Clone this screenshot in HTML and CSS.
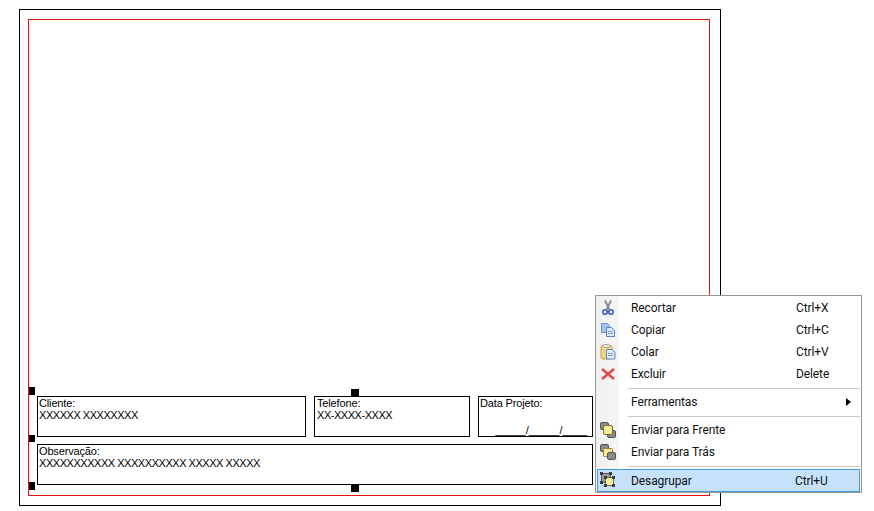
FILE: index.html
```html
<!DOCTYPE html>
<html lang="pt">
<head>
  <meta charset="UTF-8">
  <title>Desagrupar</title>
  <link rel="stylesheet" href="styles.css">
</head>
<body>
  <!-- folha do projeto -->
  <div class="sheet">
    <div class="margin"></div>

    <div class="field field-cliente">
      <p class="label">Cliente:</p>
      <p class="value">XXXXXX XXXXXXXX</p>
    </div>
    <div class="field field-telefone">
      <p class="label">Telefone:</p>
      <p class="value">XX-XXXX-XXXX</p>
    </div>
    <div class="field field-data">
      <p class="label">Data Projeto:</p>
      <p class="date">_____/_____/____</p>
    </div>
    <div class="field field-obs">
      <p class="label">Observação:</p>
      <p class="value">XXXXXXXXXXX XXXXXXXXXX XXXXX XXXXX</p>
    </div>

    <span class="handle h-top-left"></span>
    <span class="handle h-top-mid"></span>
    <span class="handle h-mid-left"></span>
    <span class="handle h-bottom-left"></span>
    <span class="handle h-bottom-mid"></span>
  </div>

  <!-- menu de contexto -->
  <div class="menu">
    <div class="item">
      <svg class="icon" viewBox="0 0 16 16">
        <path d="M5 0.5l4.4 9M11 0.5L6.6 9.5" stroke="#7f8896" stroke-width="1.8" fill="none"/>
        <circle cx="5" cy="12" r="2.3" fill="#dfe8f5" stroke="#3e68b4" stroke-width="1.6"/>
        <circle cx="11" cy="12" r="2.3" fill="#dfe8f5" stroke="#3e68b4" stroke-width="1.6"/>
      </svg>
      <span class="name">Recortar</span><span class="key">Ctrl+X</span>
    </div>
    <div class="item">
      <svg class="icon" viewBox="0 0 16 16">
        <path d="M1.5 1.5h6l2 2v7h-8z" fill="#a9c1ee" stroke="#6f8ccb"/>
        <path d="M6.5 5.5h5l3 3v6h-8z" fill="#dce7f9" stroke="#5f7fc4"/>
        <path d="M8 9.5h5M8 11.5h5" stroke="#7f9bd6"/>
      </svg>
      <span class="name">Copiar</span><span class="key">Ctrl+C</span>
    </div>
    <div class="item">
      <svg class="icon" viewBox="0 0 16 16">
        <rect x="1" y="1.5" width="11" height="13.5" rx="2" fill="#f5d77e" stroke="#b9a15c"/>
        <rect x="3.5" y="0.5" width="6" height="3" rx="1" fill="#ece8d8" stroke="#a8a48c"/>
        <path d="M6.5 5.5h5.5l3 2.5v7h-8.5z" fill="#e4ecfa" stroke="#6b86c6"/>
        <path d="M8 9.5h5.5M8 11.5h5.5" stroke="#7f9bd6"/>
      </svg>
      <span class="name">Colar</span><span class="key">Ctrl+V</span>
    </div>
    <div class="item">
      <svg class="icon" viewBox="0 0 16 16">
        <path d="M2 3l12 10M14 3L2 13" stroke="#e8474c" stroke-width="2.6" fill="none"/>
      </svg>
      <span class="name">Excluir</span><span class="key">Delete</span>
    </div>
    <div class="sep"></div>
    <div class="item">
      <span class="name">Ferramentas</span><span class="arrow"></span>
    </div>
    <div class="sep"></div>
    <div class="item">
      <svg class="icon" viewBox="0 0 16 16">
        <rect x="0.5" y="0.5" width="8" height="7" rx="1.5" fill="#8a8a8a" stroke="#555"/>
        <rect x="7.5" y="8.5" width="8" height="7" rx="1.5" fill="#8a8a8a" stroke="#555"/>
        <rect x="3.5" y="3.5" width="9" height="9" rx="1.5" fill="#fbeb8f" stroke="#77724a"/>
      </svg>
      <span class="name">Enviar para Frente</span>
    </div>
    <div class="item">
      <svg class="icon" viewBox="0 0 16 16">
        <rect x="0.5" y="0.5" width="8" height="7" rx="1.5" fill="#8a8a8a" stroke="#555"/>
        <rect x="3.5" y="4.5" width="9" height="8" rx="1" fill="#fbeb8f" stroke="#8a8450"/>
        <rect x="7.5" y="8.5" width="8" height="7" rx="1.5" fill="#8a8a8a" stroke="#555"/>
      </svg>
      <span class="name">Enviar para Trás</span>
    </div>
    <div class="sep"></div>
    <div class="item active">
      <svg class="icon" viewBox="0 0 17 17">
        <rect x="2.5" y="2.5" width="9" height="9" fill="#9a9a9a" stroke="#555"/>
        <rect x="6.5" y="6.5" width="8" height="8" fill="#fbf0a0" stroke="#6e6a3c"/>
        <path d="M1 1h3v3H1zM10 1h3v3h-3zM1 10h3v3H1zM5 5h3v3H5zM13 5h3v3h-3zM5 13h3v3H5zM13 13h3v3h-3z" fill="#3c3c3c"/>
      </svg>
      <span class="name">Desagrupar</span><span class="key">Ctrl+U</span>
    </div>
  </div>
</body>
</html>
```

FILE: styles.css
```css
body {
  margin: 0;
  width: 874px;
  height: 511px;
  overflow: hidden;
  background: #fff;
  position: relative;
  font-family: "Roboto", sans-serif;
  color: #000;
}

/* Folha */
.sheet {
  position: absolute;
  left: 19px;
  top: 9px;
  width: 700px;
  height: 495px;
  border: 1px solid #000;
}

.margin {
  position: absolute;
  left: 8px;
  top: 9px;
  width: 680px;
  height: 475px;
  border: 1px solid #e81010;
}

.field {
  position: absolute;
  box-sizing: border-box;
  border: 1px solid #000;
  padding: 1px;
  font-family: "Liberation Sans", sans-serif;
  font-size: 11px;
  line-height: 11px;
}

.field p {
  margin: 0;
  white-space: nowrap;
}

.field .label {
  letter-spacing: -0.15px;
}

.field .value {
  margin-top: 1px;
  letter-spacing: -0.46px;
}

.field-cliente { left: 17px; top: 386px; width: 269px; height: 41px; }
.field-telefone { left: 294px; top: 386px; width: 156px; height: 41px; padding-left: 2px; }
.field-data { left: 458px; top: 386px; width: 115px; height: 41px; }
.field-obs { left: 17px; top: 434px; width: 556px; height: 41px; }

.field .date {
  position: absolute;
  right: 5px;
  bottom: 0;
}

.handle {
  position: absolute;
  background: #000;
}

.h-top-left { left: 9px; top: 377px; width: 6px; height: 8px; }
.h-top-mid { left: 331px; top: 379px; width: 8px; height: 7px; }
.h-mid-left { left: 9px; top: 425px; width: 6px; height: 7px; }
.h-bottom-left { left: 9px; top: 472px; width: 6px; height: 8px; }
.h-bottom-mid { left: 331px; top: 475px; width: 8px; height: 7px; }

/* Menu */
.menu {
  position: absolute;
  left: 595px;
  top: 295px;
  box-sizing: border-box;
  width: 267px;
  height: 198px;
  padding: 1px;
  border: 1px solid #979797;
  background: linear-gradient(to right, #f1f1f1 0, #f5f5f5 23px, #fff 23px);
}

.item {
  display: flex;
  align-items: center;
  box-sizing: border-box;
  height: 22px;
  position: relative;
  padding-left: 34px;
  font-size: 12px;
  letter-spacing: -0.1px;
  color: #111;
}

.icon {
  position: absolute;
  left: 3px;
  top: 3px;
  width: 16px;
  height: 16px;
}

.name {
  flex: 1;
}

.key {
  width: 64px;
}

.arrow {
  width: 0;
  height: 0;
  margin-right: 9px;
  border-left: 5px solid #000;
  border-top: 4px solid transparent;
  border-bottom: 4px solid transparent;
}

.sep {
  height: 1px;
  margin: 3px 0 2px 31px;
  background: #c8c8c8;
}

.item.active {
  height: 23px;
  border: 1px solid #3f9ae8;
  background: #c5e1fb;
  padding-left: 33px;
}

.item.active .icon {
  left: 1px;
  top: 1px;
  width: 17px;
  height: 17px;
}
```
